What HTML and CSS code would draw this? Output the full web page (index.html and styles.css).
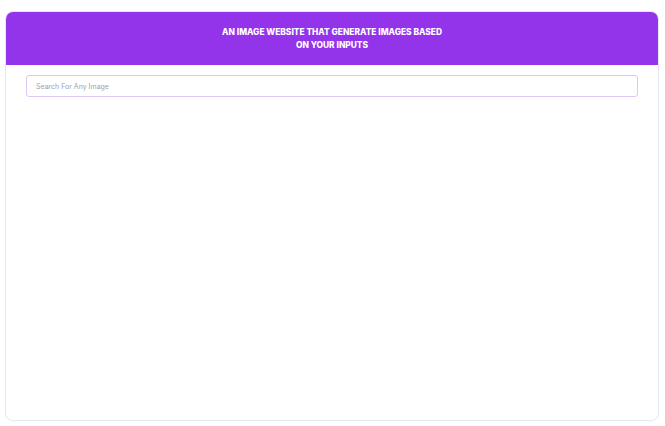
FILE: index.html
```html
<!DOCTYPE html>
<html>
<head>
<meta charset="utf-8">
<link rel="stylesheet" href="styles.css">
</head>
<body>
<div class="page">
  <div class="card">
    <header class="header">
      <h1 class="title">An image website that generate images based on your inputs</h1>
    </header>
    <div class="body">
      <input class="search" type="text" placeholder="Search For Any Image">
    </div>
  </div>
</div>
</body>
</html>
```
FILE: styles.css
```css
html, body {
  margin: 0;
  padding: 0;
  background: #ffffff;
}
body {
  font-family: Inter, "Noto Sans", sans-serif;
}
.page {
  padding: 11px 6px 5px 5px;
  height: 426px;
  box-sizing: border-box;
  display: flex;
}
.card {
  flex: 1;
  display: flex;
  flex-direction: column;
  border: 1px solid #e5e7eb;
  border-radius: 8px;
  overflow: hidden;
  background: #fff;
}
.header {
  background: #9333ea;
  height: 53px;
  display: flex;
  align-items: center;
  justify-content: center;
  flex-shrink: 0;
}
.title {
  margin: 0;
  color: #fff;
  font-size: 8.4px;
  font-weight: 800;
  line-height: 13px;
  text-transform: uppercase;
  text-align: center;
  max-width: 222px;
}
.body {
  padding: 10px 20px;
}
.search {
  display: block;
  width: 100%;
  box-sizing: border-box;
  height: 22px;
  border: 1px solid #dcc8f5;
  border-radius: 3px;
  padding: 0 9px;
  font-family: Inter, "Noto Sans", sans-serif;
  font-size: 7px;
  outline: none;
}
.search::placeholder {
  color: #a1a1aa;
}
```
